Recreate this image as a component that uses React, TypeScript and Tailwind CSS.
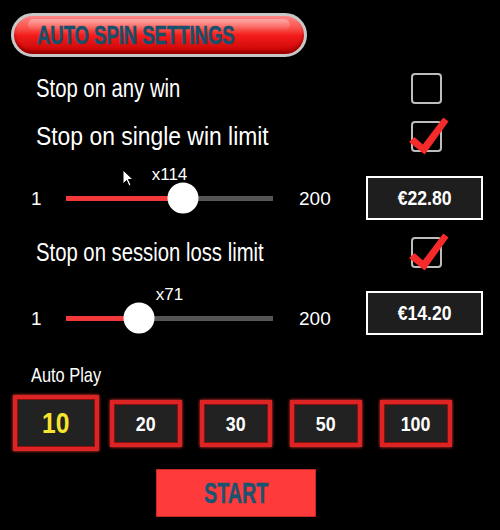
import React from 'react';

const arial = "font-['Liberation_Sans',Arial,sans-serif]";

function CheckBox({ checked }: { checked?: boolean }) {
  return (
    <div className="relative w-[31px] h-[31px] border-2 border-[#bdbdbd] rounded-[4px]">
      {checked && (
        <svg className="absolute left-[-5px] top-[-8px]" width="42" height="42" viewBox="-5 -8 42 42">
          <path
            d="M-3 19 L1.5 15 L10 22.5 L30.5 -4.5 L34.5 -1.5 L11.5 30.5 Z"
            fill="#f52a2a"
            stroke="#f52a2a"
            strokeWidth="1.5"
            strokeLinejoin="round"
          />
        </svg>
      )}
    </div>
  );
}

function OptionRow({ label, checked, className = '', textClass = 'scale-x-[0.8]' }: { label: string; checked?: boolean; className?: string; textClass?: string }) {
  return (
    <div className={`h-[48px] flex items-center justify-between pl-[36px] pr-[58px] ${className}`}>
      <span className={`${arial} inline-block origin-left ${textClass} text-[26px] leading-none whitespace-nowrap`}>{label}</span>
      <CheckBox checked={checked} />
    </div>
  );
}

function SliderRow({ pos, label, value, className = '', boxClass = '' }: { pos: number; label: string; value: string; className?: string; boxClass?: string }) {
  return (
    <div className={`h-[44px] flex items-center pl-[31px] ${className}`}>
      <span className={`${arial} w-[35px] text-[19px] leading-none`}>1</span>
      <div className="relative w-[207px] h-[5px] bg-[#555555]">
        <div className="absolute left-0 top-0 h-full bg-[#f23838]" style={{ width: pos }} />
        <div
          className="absolute top-1/2 w-[31px] h-[31px] -translate-x-1/2 -translate-y-1/2 rounded-full bg-white"
          style={{ left: pos }}
        />
        <span className={`${arial} absolute left-1/2 -translate-x-1/2 bottom-[18px] text-[17px] leading-none`}>{label}</span>
      </div>
      <span className={`${arial} ml-[26px] w-[67px] text-[19px] leading-none`}>200</span>
      <div className={`w-[117px] h-[44px] border-2 border-white bg-[#1e1e1e] flex items-center justify-center ${boxClass}`}>
        <span className={`${arial} inline-block scale-x-[0.88] font-bold text-[20px] leading-none`}>{value}</span>
      </div>
    </div>
  );
}

export default function App() {
  const counts = ['20', '30', '50', '100'];

  return (
    <div className="relative w-[500px] h-[530px] overflow-hidden bg-black text-white">
      <div className="pt-[13px] pl-[11px]">
        <div className="relative w-[296px] h-[44px] rounded-full border-[3px] border-[#c8c8c8] bg-gradient-to-b from-[#ff8585] via-[#f41c1c] to-[#c40000] shadow-[inset_0_-3px_3px_rgba(110,0,0,0.55),0_0_3px_#000] flex items-center pl-[23px] overflow-hidden">
          <div className="absolute left-[14px] right-[14px] top-[3px] h-[12px] rounded-full bg-gradient-to-b from-white/35 to-white/0" />
          <span className={`${arial} relative inline-block origin-left scale-x-[0.71] whitespace-nowrap text-[#17506c] font-bold text-[26px] leading-none [-webkit-text-stroke:0.6px_#17506c]`}>
            AUTO SPIN SETTINGS
          </span>
        </div>
      </div>

      <OptionRow className="mt-[7px]" label="Stop on any win" textClass="scale-x-[0.78]" />
      <OptionRow label="Stop on single win limit" checked textClass="scale-x-[0.88]" />

      <SliderRow className="mt-[16px]" pos={117} label="x114" value="€22.80" />

      <OptionRow className="mt-[8px]" label="Stop on session loss limit" checked textClass="scale-x-[0.78]" />

      <SliderRow className="mt-[20px]" pos={73} label="x71" value="€14.20" boxClass="mb-[10px]" />

      <div className="mt-[22px] pl-[31px] h-[24px] flex items-center">
        <span className={`${arial} inline-block origin-left scale-x-[0.78] text-[21px] leading-none whitespace-nowrap`}>Auto Play</span>
      </div>

      <div className="mt-[9px] h-[56px] flex items-center pl-[13px] gap-[18px]">
        <button className="w-[86px] h-[56px] mr-[-7px] border-[4px] border-[#dc2424] bg-[#222222] shadow-[0_0_3px_#ff3a3a,inset_0_0_0_1px_#8a1010] flex items-center justify-center">
          <span className={`${arial} inline-block scale-x-[0.82] font-bold text-[30px] leading-none text-[#f7e42c]`}>10</span>
        </button>
        {counts.map((c) => (
          <button
            key={c}
            className="w-[72px] h-[47px] border-[4px] border-[#dc2424] bg-[#222222] shadow-[0_0_3px_#ff3a3a,inset_0_0_0_1px_#8a1010] flex items-center justify-center"
          >
            <span className={`${arial} inline-block scale-x-[0.85] font-bold text-[21px] leading-none text-white`}>{c}</span>
          </button>
        ))}
      </div>

      <div className="mt-[18px] pl-[156px]">
        <button className="w-[160px] h-[48px] bg-[#ff3a3a] border border-[#c42626] flex items-center justify-center">
          <span className={`${arial} inline-block scale-x-[0.68] font-bold text-[29px] leading-none text-[#1a5471] [-webkit-text-stroke:0.5px_#1a5471]`}>START</span>
        </button>
      </div>

      <svg className="absolute left-[122px] top-[169px]" width="13" height="19" viewBox="0 0 13 19">
        <path d="M1 1 L1 15 L4.5 11.5 L7 17 L9 16 L6.5 10.5 L11 10.5 Z" fill="white" stroke="black" strokeWidth="1" />
      </svg>
    </div>
  );
}
